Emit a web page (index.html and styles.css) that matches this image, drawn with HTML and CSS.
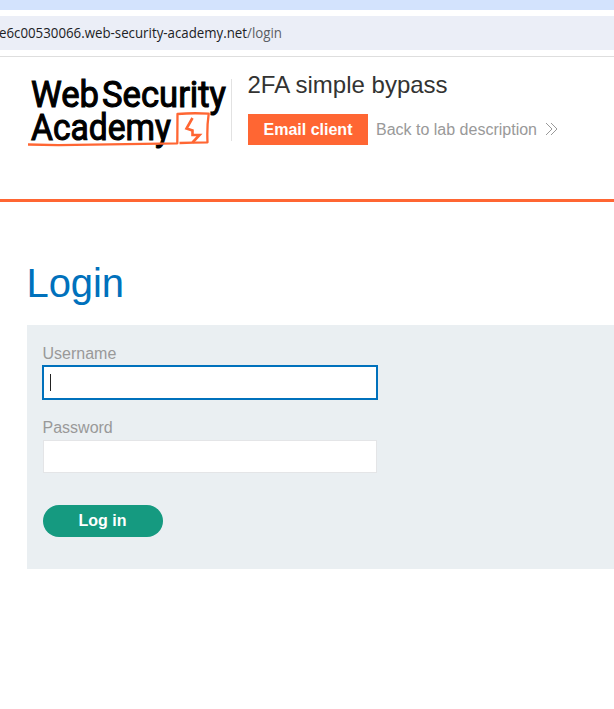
FILE: index.html
```
<!DOCTYPE html>
<html lang="en">
<head>
<meta charset="utf-8">
<title>2FA simple bypass</title>
<link rel="stylesheet" href="styles.css">
</head>
<body>
<div class="tab-strip"></div>
<div class="toolbar">
  <div class="address"><svg class="url" width="300" height="34"><text x="-1" y="22" textLength="283" lengthAdjust="spacingAndGlyphs">e6c00530066.web-security-academy.net<tspan class="path">/login</tspan></text></svg></div>
</div>
<header class="lab-header">
  <svg class="logo" width="204" height="78" viewBox="0 0 204 78" role="img" aria-label="Web Security Academy">
    <g class="logo-text">
      <text x="3" y="35.500" textLength="68" lengthAdjust="spacingAndGlyphs">Web</text>
      <text x="74" y="35.500" textLength="124" lengthAdjust="spacingAndGlyphs">Security</text>
      <text x="3" y="68.500" textLength="140" lengthAdjust="spacingAndGlyphs">Academy</text>
    </g>
    <g class="logo-mark">
      <path d="M0 73.500L30 74.200C70 73.500 110 72.600 149.300 72.300L149.500 43Q165 41.700 180.700 42.700Q178.800 56 179.500 71.300Q165 71.500 151.500 72"/>
      <path class="bolt" d="M164.500 47L158.500 57.500L164.500 59.500V64H171.500L164.500 71.500"/>
    </g>
  </svg>
  <div class="lab-info">
    <h2>2FA simple bypass</h2>
    <div class="actions">
      <a class="email">Email client</a>
      <a class="back">Back to lab description</a>
      <svg class="chevrons" width="13" height="14" viewBox="0 0 13 14"><path d="M1 1l6 6-6 6M6 1l6 6-6 6"/></svg>
    </div>
  </div>
</header>
<main>
  <h1>Login</h1>
  <form class="login-form">
    <label>Username</label>
    <div class="field focused"><span class="caret"></span></div>
    <label>Password</label>
    <div class="field"></div>
    <button type="button">Log in</button>
  </form>
</main>
</body>
</html>
```
FILE: styles.css
```
* { box-sizing: border-box; }
body { margin: 0; width: 614px; height: 709px; overflow: hidden; background: #fff; font-family: "Liberation Sans", Arial, sans-serif; color: #333332; }
.tab-strip { height: 10px; background: #d3e3fd; }
.toolbar { height: 47px; padding-top: 6px; border-bottom: 1px solid #dedede; }
.address { height: 34px; background: #ebeef7; }
.url { display: block; font: 14px "Open Sans", "Noto Sans", sans-serif; fill: #202124; }
.url .path { fill: #5b5e64; }
.lab-header { display: flex; height: 145px; padding: 14px 0 0 28px; border-bottom: 3px solid #ff6633; }
.logo { display: block; flex: none; }
.logo-text { font: 400 37px Roboto, sans-serif; fill: #000; stroke: #000; stroke-width: 1.1; }
.logo-mark { fill: none; stroke: #ff6633; stroke-width: 2.3; stroke-linejoin: round; }
.logo-mark .bolt { stroke-width: 2.6; stroke-linejoin: miter; }
.lab-info { position: relative; padding-left: 16px; }
.lab-info::before { content: ""; position: absolute; left: -1px; top: 8px; width: 1px; height: 62px; background: #e2e2e2; }
h2 { margin: 0 0 0 -0.5px; font-size: 24px; line-height: 27px; font-weight: 400; white-space: nowrap; }
.actions { display: flex; align-items: center; height: 31px; margin-top: 16px; font-size: 16px; white-space: nowrap; }
.email { width: 120px; height: 31px; line-height: 31px; background: #ff6633; color: #fff; font-weight: 700; text-align: center; }
.back { margin: 0 8px; color: #999; }
.chevrons { position: relative; top: -1px; fill: none; stroke: #999; stroke-width: 1; }
main { padding-left: 27px; }
h1 { margin: 58px 0 0 -0.5px; height: 65px; line-height: 46px; font-size: 40px; font-weight: 400; letter-spacing: -.1px; color: #0071bc; }
.login-form { display: flex; flex-direction: column; align-items: flex-start; height: 244px; padding: 19px 16px 0; background: #eaeff2; }
label { height: 22px; line-height: 19px; font-size: 16px; color: #999; margin-left: -0.5px; }
.field { width: 334px; height: 33px; margin-bottom: 32px; border: 1px solid #e4e5e7; background: #fff; }
.focused { margin-bottom: 19px; border: 1px solid #0071bc; outline: 1px solid #0071bc; padding: 7px 0 0 6px; }
.caret { display: block; width: 1px; height: 17px; background: #222; }
button { width: 120px; height: 32px; padding: 0 1px 0 0; border: 0; border-radius: 16px; background: #159a80; color: #fff; font: 700 16px "Liberation Sans", Arial, sans-serif; }
```
